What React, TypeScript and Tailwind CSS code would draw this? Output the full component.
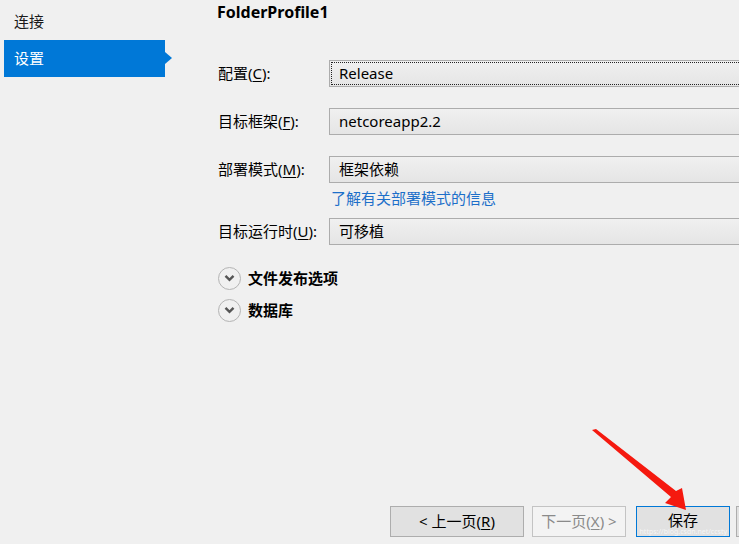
const font = { fontFamily: '"Noto Sans", "Noto Sans CJK SC", sans-serif' };

function Label({ text, accel }: { text: string; accel: string }) {
  return (
    <div className="w-[111px] shrink-0 text-[15px] text-black leading-none">
      {text}(<span className="underline underline-offset-2">{accel}</span>):
    </div>
  );
}

function Combo({ value, focused }: { value: string; focused?: boolean }) {
  return (
    <div className="w-[430px] h-[27px] shrink-0 border border-[#acacac] bg-gradient-to-b from-[#f0f0f0] to-[#e5e5e5] p-[1px]">
      <div
        className={`h-full flex items-center pl-[7px] text-[15px] text-black ${
          focused ? "border border-dotted border-[#222]" : "border border-transparent"
        }`}
      >
        {value}
      </div>
    </div>
  );
}

function Expander({ title }: { title: string }) {
  return (
    <div className="flex items-center h-[32px] gap-[7px]">
      <div className="w-[23px] h-[23px] rounded-full border-[1.5px] border-[#b4b4b4] flex items-center justify-center">
        <svg width="11" height="8" viewBox="0 0 11 8">
          <path d="M1.5 1.8 L5.5 5.8 L9.5 1.8" fill="none" stroke="#555" strokeWidth="2.4" />
        </svg>
      </div>
      <span className="text-[15px] font-bold text-black">{title}</span>
    </div>
  );
}

export default function App() {
  return (
    <div className="relative w-[739px] h-[544px] overflow-hidden bg-[#f0f0f0] flex" style={font}>
      {/* sidebar */}
      <div className="w-[216px] shrink-0 pt-[3px] pl-[4px]">
        <div className="w-[161px] h-[37px] flex items-center pl-[10px] text-[15px] text-[#1a1a1a]">连接</div>
        <div className="relative w-[161px] h-[37px] flex items-center pl-[10px] text-[15px] text-white bg-[#0078d7]">
          设置
          <div className="absolute left-full top-[12px] w-0 h-0 border-y-[6px] border-y-transparent border-l-[7px] border-l-[#0078d7]" />
        </div>
      </div>

      {/* main */}
      <div className="flex-1 flex flex-col">
        <div className="h-[24px] pl-[1px] text-[16px] font-bold text-black leading-[24px]">FolderProfile1</div>

        <div className="flex flex-col pl-[2px]">
          <div className="flex items-center mt-[36px]">
            <Label text="配置" accel="C" />
            <Combo value="Release" focused />
          </div>
          <div className="flex items-center mt-[21px]">
            <Label text="目标框架" accel="F" />
            <Combo value="netcoreapp2.2" />
          </div>
          <div className="flex items-center mt-[21px]">
            <Label text="部署模式" accel="M" />
            <Combo value="框架依赖" />
          </div>
          <div className="ml-[113px] h-[35px] pb-[5px] flex items-center text-[15px] text-[#1c6fc9]">了解有关部署模式的信息</div>
          <div className="flex items-center">
            <Label text="目标运行时" accel="U" />
            <Combo value="可移植" />
          </div>
          <div className="mt-[17px] flex flex-col">
            <Expander title="文件发布选项" />
            <Expander title="数据库" />
          </div>
        </div>

        <div className="mt-auto mb-[7px] ml-[174px] flex items-center text-[15px]">
          <div className="w-[134px] h-[31px] shrink-0 border border-[#adadad] bg-[#e1e1e1] flex items-center justify-center text-black">
            &lt; 上一页(<span className="underline underline-offset-2">R</span>)
          </div>
          <div className="ml-[8px] w-[94px] h-[31px] shrink-0 border border-[#c3c3c3] bg-[#f3f3f3] flex items-center justify-center text-[#8a8a8a]">
            下一页(<span className="underline underline-offset-2">X</span>) &gt;
          </div>
          <div className="relative ml-[10px] w-[94px] h-[31px] shrink-0 border border-[#0078d7] bg-[#e1e1e1] flex items-center justify-center text-black">
            <span className="-mt-[2px]">保存</span>
            <span className="absolute right-[2px] bottom-[1px] text-[7px] text-white/70 leading-none">https://blog.csdn.net/ccsty</span>
          </div>
          <div className="ml-[6px] w-[94px] h-[31px] shrink-0 border border-[#adadad] bg-[#e1e1e1]" />
        </div>
      </div>

      {/* red annotation arrow */}
      <svg className="absolute left-0 top-0 pointer-events-none" width="739" height="544">
        <polygon points="592,430 596,429 676,491 682,488 686,510 665,503 671,497" fill="#f5190f" />
      </svg>
    </div>
  );
}
